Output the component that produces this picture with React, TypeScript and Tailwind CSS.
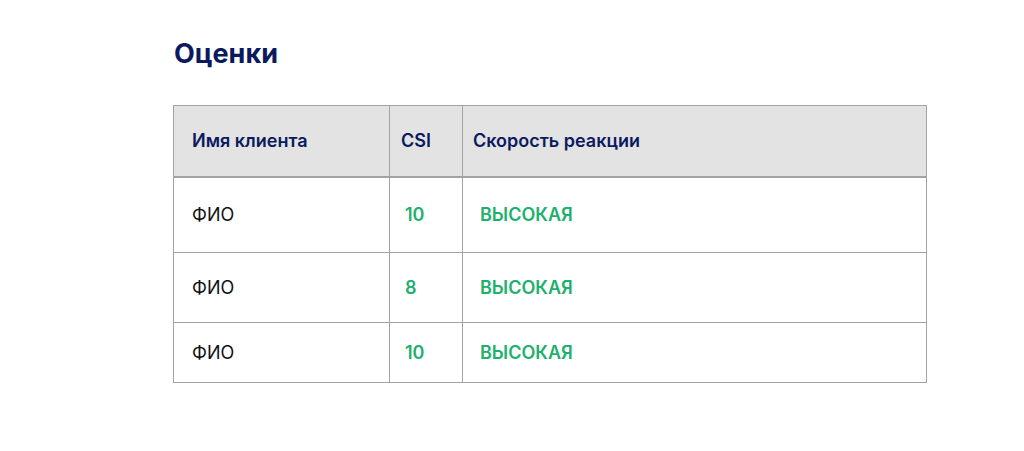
import React from "react";

const rows = [
  { name: "ФИО", csi: "10", speed: "ВЫСОКАЯ", h: "h-[76px]" },
  { name: "ФИО", csi: "8", speed: "ВЫСОКАЯ", h: "h-[70px]" },
  { name: "ФИО", csi: "10", speed: "ВЫСОКАЯ", h: "h-[60px]" },
];

export default function App() {
  return (
    <div className="min-h-screen bg-white font-['Inter',sans-serif] pl-[173px] pt-[37px]">
      <h1 className="text-[27px] leading-[34px] font-bold text-[#0b1a5e] ml-[1px]">
        Оценки
      </h1>
      <table className="mt-[34px] w-[754px] border-collapse table-fixed">
        <colgroup>
          <col className="w-[216px]" />
          <col className="w-[73px]" />
          <col />
        </colgroup>
        <thead>
          <tr className="h-[71px] bg-[#e3e3e3] text-left text-[18px] text-[#0b1a5e]">
            <th className="border border-[#a3a3a3] border-b-2 pl-[18px] font-semibold">
              Имя клиента
            </th>
            <th className="border border-[#a3a3a3] border-b-2 pl-[11px] font-semibold">
              CSI
            </th>
            <th className="border border-[#a3a3a3] border-b-2 pl-[10px] font-semibold">
              Скорость реакции
            </th>
          </tr>
        </thead>
        <tbody>
          {rows.map((r, i) => (
            <tr key={i} className={`${r.h} text-[18px]`}>
              <td className="border border-[#a3a3a3] pl-[18px] text-[#111]">{r.name}</td>
              <td className="border border-[#a3a3a3] pl-[15px] font-semibold text-[#1eb06d]">
                {r.csi}
              </td>
              <td className="border border-[#a3a3a3] pl-[17px] font-semibold text-[#1eb06d]">
                {r.speed}
              </td>
            </tr>
          ))}
        </tbody>
      </table>
    </div>
  );
}
